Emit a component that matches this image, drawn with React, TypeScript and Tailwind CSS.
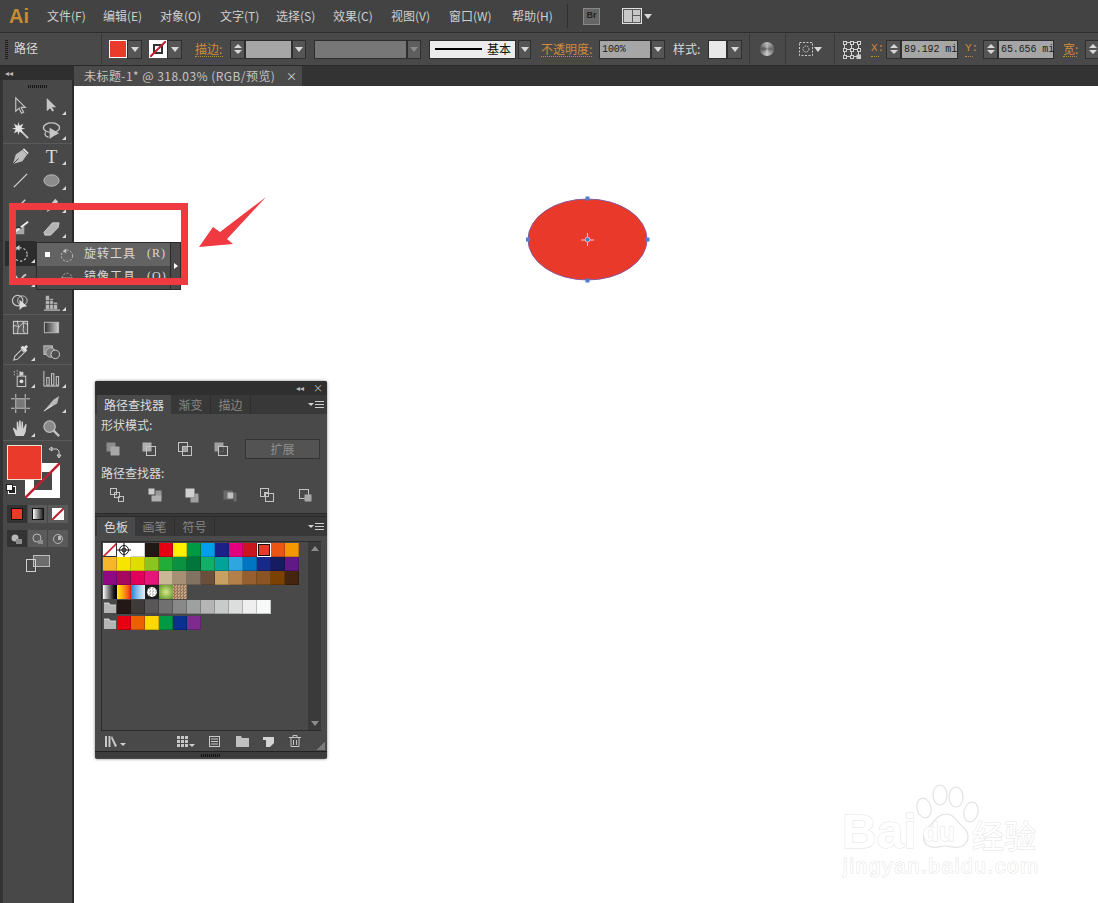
import type { ReactNode } from 'react';

const cjk = "font-['Noto_Sans_CJK_SC','Noto_Sans',sans-serif]";
const ic = '#c6c6c6';

function Svg({ size = 20, box = 20, children }: { size?: number; box?: number; children: ReactNode }) {
  return (
    <svg width={size} height={size} viewBox={`0 0 ${box} ${box}`} fill="none" className="block shrink-0">
      {children}
    </svg>
  );
}

/* ---------- left toolbar icons ---------- */
const tools: Record<string, ReactNode> = {
  select: <path d="M5 2v14l3.5-3.2 2.6 5.4 2.2-1-2.6-5.2H15z" stroke={ic} strokeWidth="1.2" />,
  direct: <path d="M5 2v14l3.5-3.2 2.4 3.6 1.8-1.2-2.2-3.4H15z" fill={ic} />,
  wand: (
    <>
      <path d="M9 9l9 9" stroke={ic} strokeWidth="2" />
      <path d="M8 1l1 4 4-2-2 4 4 1-4 1 2 4-4-2-1 4-1-4-4 2 2-4-4-1 4-1-2-4 4 2z" fill="#e4e4e4" />
    </>
  ),
  lasso: (
    <>
      <ellipse cx="10" cy="7" rx="8.5" ry="5" stroke={ic} strokeWidth="1.5" />
      <path d="M8 7v12l4-3 6-3z" fill={ic} />
      <path d="M4 11c-2 3 0 6 3 6" stroke={ic} strokeWidth="1.2" />
    </>
  ),
  pen: (
    <>
      <path d="M2 18l3-10 7-5 5 5-5 7z" fill="#bdbdbd" />
      <path d="M2 18l6-6" stroke="#444" strokeWidth="1" />
      <path d="M13 2l5 5" stroke="#e0e0e0" strokeWidth="2" />
    </>
  ),
  text: <text x="10" y="17" textAnchor="middle" fontSize="20" fill="#d8d8d8" fontFamily="'Liberation Serif',serif">T</text>,
  line: <path d="M3 17L17 3" stroke="#d4d4d4" strokeWidth="1.3" />,
  ellipse: <ellipse cx="10" cy="10" rx="8" ry="6" fill="#8c8c8c" stroke="#bdbdbd" />,
  brush: <path d="M4 16L15 5" stroke="#d4d4d4" strokeWidth="1.4" />,
  pencil: <path d="M5 18l2-6 7-8 3 3-7 8z" fill="#c8c8c8" />,
  blob: (
    <>
      <path d="M2 16l3-7 9-1v8z" fill="#a8a8a8" />
      <path d="M5 13L18 3" stroke="#eee" strokeWidth="2" />
      <path d="M3 11c3-3 6-3 8-1" stroke="#333" strokeWidth="1.5" />
    </>
  ),
  eraser: <path d="M2 14L11 4h7l-1 5-8 8H3z" fill="#b4b4b4" stroke="#dadada" strokeWidth=".8" />,
  rotate: (
    <>
      <circle cx="10" cy="11" r="7" stroke="#bdbdbd" strokeWidth="1.3" strokeDasharray="2.5 2" />
      <path d="M9 1v6l-4-3z" fill="#cfcfcf" />
    </>
  ),
  warp: (
    <>
      <path d="M3 6c3 0 2 5 6 5s3-5 7-5" stroke={ic} strokeWidth="2" />
      <path d="M3 16l5-5" stroke={ic} strokeWidth="2" />
    </>
  ),
  builder: (
    <>
      <circle cx="7" cy="8" r="5.5" stroke={ic} strokeWidth="1.3" />
      <circle cx="12" cy="8" r="5" stroke={ic} strokeWidth="1" />
      <path d="M9 7v11l3-3 5-1z" fill="#dcdcdc" />
    </>
  ),
  grid: (
    <>
      <path d="M4 3h4v14H4zM8 6h4v11H8zM12 10h4v7h-4z" fill="#b5b5b5" />
      <path d="M4 8h12M4 12h12M8 3v14M12 6v11" stroke="#444" strokeWidth=".8" />
      <path d="M2 18h17" stroke="#ddd" />
    </>
  ),
  mesh: (
    <>
      <rect x="2.5" y="3.5" width="15" height="13" fill="#5c5c5c" stroke="#d4d4d4" />
      <path d="M2 9c4-3 5 3 8-1s4-3 8-1M7 3c-1 4 2 5 1 7s-1 4-1 6M13 4c-1 3 1 5 0 7s1 4 1 5" stroke="#e0e0e0" strokeWidth=".9" />
    </>
  ),
  gradient: (
    <>
      <defs>
        <linearGradient id="tg" x1="0" x2="1">
          <stop offset="0" stopColor="#2f2f2f" />
          <stop offset="1" stopColor="#d0d0d0" />
        </linearGradient>
      </defs>
      <rect x="2.5" y="4.5" width="15" height="11" fill="url(#tg)" stroke="#bbb" />
    </>
  ),
  dropper: (
    <>
      <path d="M3 18l1-4 7-7 3 3-7 7z" stroke="#d0d0d0" strokeWidth="1.1" />
      <path d="M10 5l5 5 2-2-1-2 2-2-2-2-2 2-2-1z" fill="#dcdcdc" />
    </>
  ),
  blend: (
    <>
      <rect x="2" y="3" width="9" height="9" fill="#8a8a8a" stroke="#c4c4c4" />
      <circle cx="9" cy="10" r="5" fill="#777" stroke="#c4c4c4" />
      <circle cx="14" cy="12" r="4.5" fill="#4c4c4c" stroke="#d0d0d0" />
    </>
  ),
  spray: (
    <>
      <path d="M3 3h1M6 2h1M9 3h1M3 6h1M6 5h1M9 6h1" stroke="#ddd" strokeWidth="1.2" />
      <rect x="6.5" y="7.5" width="9" height="11" stroke="#d4d4d4" />
      <rect x="9" y="3" width="4" height="4" fill="#cfcfcf" />
      <circle cx="11" cy="13" r="2" fill="#ddd" />
    </>
  ),
  graph: (
    <>
      <path d="M2 2v16h16" stroke="#cfcfcf" />
      <rect x="5" y="9" width="2.5" height="8" stroke="#cfcfcf" />
      <rect x="10" y="5" width="2.5" height="12" stroke="#cfcfcf" />
      <rect x="15" y="8" width="2.5" height="9" stroke="#cfcfcf" />
    </>
  ),
  artboard: (
    <>
      <rect x="5" y="5" width="10" height="10" fill="#787878" stroke="#bdbdbd" />
      <path d="M0 5h4M16 5h4M0 15h4M16 15h4M5 0v4M15 0v4M5 16v4M15 16v4" stroke="#d0d0d0" />
    </>
  ),
  slice: (
    <>
      <path d="M2 18L12 6l6-4-2 8z" fill="#b8b8b8" />
      <path d="M2 18l9-6" stroke="#e4e4e4" />
    </>
  ),
  hand: <path d="M5 18L2 10l1-1 3 3V3h1.5l1 7V1.5h1.5l1 8.5V2.5h1.5l.5 8 2-5h1.5l-1 8-2 4.5z" fill="#cfcfcf" />,
  zoom: (
    <>
      <circle cx="8" cy="8" r="6" fill="#8a8a8a" stroke="#bcbcbc" strokeWidth="1.3" />
      <path d="M12 12l6 6" stroke="#c4c4c4" strokeWidth="2.4" />
    </>
  ),
};

function Tool({ name, corner = true, active = false }: { name: string; corner?: boolean; active?: boolean }) {
  return (
    <div className={`relative flex h-full w-[31px] items-center justify-center ${active ? 'bg-[#2c2c2c]' : ''}`}>
      <Svg size={19}>{tools[name]}</Svg>
      {corner && <span className="absolute bottom-[3px] right-[1px] h-0 w-0 border-b-[4px] border-l-[4px] border-b-[#d8d8d8] border-l-transparent" />}
    </div>
  );
}

function ToolRow({ a, b, ca = false, cb = true, active = false, h = 'h-[25px]' }: { a: string; b: string; ca?: boolean; cb?: boolean; active?: boolean; h?: string }) {
  return (
    <div className={`flex ${h} shrink-0 pl-[2px] pr-[2px]`}>
      <Tool name={a} corner={ca} active={active} />
      <Tool name={b} corner={cb} />
    </div>
  );
}

const Sep = () => <div className="h-[1px] shrink-0 bg-[#5a5a5a]" />;

function ModeCell({ children, active = false }: { children: ReactNode; active?: boolean }) {
  return <div className={`flex flex-1 items-center justify-center ${active ? 'bg-[#333333]' : 'bg-[#5a5a5a]'}`}>{children}</div>;
}

function Toolbar() {
  return (
    <aside className="flex w-[74px] shrink-0 flex-col border-r-2 border-l-[3px] border-r-[#2a2a2a] border-l-[#333333] bg-[#484848]">
      <div className="-ml-[3px] flex h-[14px] w-[74px] shrink-0 items-center bg-[#2f2f2f] pl-[5px] text-[8px] leading-none text-[#bbbbbb]">◂◂</div>
      <div className="flex h-[13px] shrink-0 items-center justify-center">
        <div className="h-[3px] w-[20px] bg-[repeating-linear-gradient(90deg,#151515_0_1px,transparent_1px_2px)]" />
      </div>
      <ToolRow a="select" b="direct" />
      <ToolRow a="wand" b="lasso" />
      <Sep />
      <ToolRow a="pen" b="text" h="h-[24px]" />
      <ToolRow a="line" b="ellipse" />
      <ToolRow a="brush" b="pencil" h="h-[23px]" />
      <ToolRow a="blob" b="eraser" />
      <ToolRow a="rotate" b="rotate" active ca />
      <ToolRow a="warp" b="warp" ca h="h-[24px]" />
      <ToolRow a="builder" b="grid" h="h-[24px]" />
      <Sep />
      <ToolRow a="mesh" b="gradient" cb={false} />
      <ToolRow a="dropper" b="blend" ca cb={false} h="h-[24px]" />
      <Sep />
      <div className="h-[1px] shrink-0" />
      <ToolRow a="spray" b="graph" ca />
      <ToolRow a="artboard" b="slice" cb />
      <ToolRow a="hand" b="zoom" ca cb={false} h="h-[24px]" />
      <Sep />

      {/* fill + stroke */}
      <div className="relative ml-[4px] mt-[4px] h-[56px] w-[60px] shrink-0">
        <div className="absolute left-[18px] top-[18px] flex h-[35px] w-[35px] items-center justify-center bg-white">
          <div className="flex h-[18px] w-[18px] items-center justify-center bg-[#484848]" />
          <svg className="absolute inset-0" width="35" height="35"><path d="M0 35L35 0" stroke="#c0202e" strokeWidth="2.5" /></svg>
        </div>
        <div className="absolute left-0 top-0 h-[35px] w-[35px] border border-[#f0e0d0] bg-[#ea3a2b]" />
        <svg className="absolute left-[41px] top-0" width="14" height="14" viewBox="0 0 14 14" fill="none">
          <path d="M3 4h6l2 2v6M1 4l3-2v4zM11 13l-2-3h4z" stroke="#d0d0d0" />
        </svg>
        <div className="absolute left-[1px] top-[41px] h-[8px] w-[8px] border border-white bg-[#222222]" />
        <div className="absolute left-[-1px] top-[39px] h-[7px] w-[7px] border border-[#222222] bg-white" />
      </div>

      <div className="ml-[4px] mt-[4px] flex h-[18px] w-[61px] shrink-0 gap-[1px]">
        <ModeCell active><div className="h-[12px] w-[12px] border border-[#111] bg-[#ea3a2b]" /></ModeCell>
        <ModeCell><div className="h-[12px] w-[12px] border border-[#111] bg-gradient-to-r from-white to-[#222222]" /></ModeCell>
        <ModeCell>
          <svg width="12" height="12"><rect width="12" height="12" fill="#fff" /><path d="M0 12L12 0" stroke="#c0202e" strokeWidth="2" /></svg>
        </ModeCell>
      </div>
      <div className="ml-[4px] mt-[7px] flex h-[17px] w-[61px] shrink-0 gap-[1px]">
        <ModeCell active>
          <Svg size={12} box={12}><circle cx="4" cy="5" r="3.5" fill="#b8b8b8" /><rect x="5" y="6" width="6" height="5" fill="#8c8c8c" /></Svg>
        </ModeCell>
        <ModeCell>
          <Svg size={12} box={12}><circle cx="5" cy="5" r="4" stroke="#b8b8b8" /><rect x="6" y="7" width="5" height="4" fill="#8c8c8c" /></Svg>
        </ModeCell>
        <ModeCell>
          <Svg size={12} box={12}><circle cx="6" cy="6" r="4.5" stroke="#b8b8b8" /><rect x="6" y="3" width="3" height="4" fill="#b8b8b8" /></Svg>
        </ModeCell>
      </div>
      <div className="mt-[8px] flex justify-center">
        <svg width="24" height="18" viewBox="0 0 24 18" fill="none">
          <rect x="7.5" y=".5" width="16" height="11" fill="#6d6d6d" stroke="#bdbdbd" />
          <rect x=".5" y="4.5" width="9" height="12" stroke="#cfcfcf" />
        </svg>
      </div>
    </aside>
  );
}

/* ---------- top bars ---------- */
const menus = [
  ['文件(F)', 'w-[39px]'],
  ['编辑(E)', 'w-[40px]'],
  ['对象(O)', 'w-[43px]'],
  ['文字(T)', 'w-[39px]'],
  ['选择(S)', 'w-[40px]'],
  ['效果(C)', 'w-[41px]'],
  ['视图(V)', 'w-[41px]'],
  ['窗口(W)', 'w-[46px]'],
  ['帮助(H)', 'w-[41px]'],
];

const Down = () => <span className="block h-0 w-0 border-x-[4px] border-t-[5px] border-x-transparent border-t-[#d8d8d8]" />;

function DropBtn({ className = 'w-[14px]' }: { className?: string }) {
  return <div className={`flex h-[19px] items-center justify-center border border-[#2e2e2e] bg-[#555555] ${className}`}><Down /></div>;
}

function Spinner() {
  return (
    <div className="flex h-[19px] w-[15px] shrink-0 flex-col items-center justify-center gap-[2px] border border-[#2e2e2e] bg-[#555555]">
      <span className="h-0 w-0 border-x-[4px] border-b-[4px] border-x-transparent border-b-[#d8d8d8]" />
      <span className="h-0 w-0 border-x-[4px] border-t-[4px] border-x-transparent border-t-[#d8d8d8]" />
    </div>
  );
}

function Field({ children, className }: { children?: ReactNode; className: string }) {
  return <div className={`flex h-[19px] shrink-0 items-center whitespace-nowrap border border-[#2e2e2e] bg-[#a6a6a6] pl-[2px] font-['Liberation_Mono',monospace] text-[10px] tracking-[-0.1px] text-[#1c1c1c] ${className}`}>{children}</div>;
}

function Label({ children, className }: { children: ReactNode; className: string }) {
  return <span className={`shrink-0 whitespace-nowrap border-b border-dotted border-[#c08a45] text-[12px] leading-[15px] text-[#d18b3c] ${className}`}>{children}</span>;
}

const VLine = ({ className }: { className: string }) => <div className={`h-[30px] w-[1px] shrink-0 bg-[#383838] ${className}`} />;

function MenuBar() {
  return (
    <header className="flex h-[33px] items-center border-b border-[#2d2d2d] bg-[#434343]">
      <span className="ml-[9px] w-[38px] font-['Liberation_Sans',sans-serif] text-[20px] font-bold leading-none text-[#c88c34]">Ai</span>
      <nav className="flex gap-[17px] text-[12px] text-[#cfcfcf]">
        {menus.map(([m, w]) => (
          <span key={m} className={`whitespace-nowrap ${w}`}>{m}</span>
        ))}
      </nav>
      <div className="ml-[14px] h-[24px] w-[1px] bg-[#2f2f2f]" />
      <div className="ml-[15px] flex h-[17px] w-[17px] items-center justify-center border border-[#888888] bg-[#666666] font-['Liberation_Sans',sans-serif] text-[9px] font-bold text-[#222222]">Br</div>
      <svg className="ml-[22px]" width="20" height="16" viewBox="0 0 20 16">
        <rect x=".5" y=".5" width="19" height="15" fill="#5a5a5a" stroke="#e0e0e0" />
        <rect x="2" y="2" width="8" height="12" fill="#c8c8c8" />
        <rect x="11" y="2" width="7" height="5" fill="#c8c8c8" />
        <rect x="11" y="8" width="7" height="6" fill="#c8c8c8" />
      </svg>
      <span className="ml-[2px]"><Down /></span>
    </header>
  );
}

function ControlBar() {
  return (
    <div className="flex h-[33px] items-center overflow-hidden border-b border-[#2a2a2a] bg-[#494949] text-[#d8d8d8]">
      <div className="ml-[5px] h-[20px] w-[3px] shrink-0 bg-[repeating-linear-gradient(0deg,#1d1d1d_0_1px,transparent_1px_2px)]" />
      <span className="ml-[6px] mb-[2px] w-[87px] shrink-0 text-[12px]">路径</span>
      <VLine className="" />
      <div className="ml-[7px] h-[18px] w-[18px] shrink-0 border border-white bg-[#ea3a2b]" />
      <DropBtn className="w-[15px] shrink-0" />
      <div className="relative ml-[7px] h-[18px] w-[18px] shrink-0 border border-white bg-white">
        <svg className="absolute inset-0" width="16" height="16"><rect x="4" y="4" width="8" height="8" fill="none" stroke="#333" strokeWidth="2" /><path d="M0 16L16 0" stroke="#c0202e" strokeWidth="2" /></svg>
      </div>
      <DropBtn className="w-[15px] shrink-0" />
      <Label className="ml-[13px] w-[28px]">描边:</Label>
      <div className="ml-[7px] flex">
        <Spinner />
        <Field className="w-[47px]" />
        <DropBtn className="w-[14px] shrink-0" />
      </div>
      <div className="ml-[8px] flex">
        <div className="h-[19px] w-[93px] shrink-0 border border-[#2e2e2e] bg-[#777777]" />
        <div className="flex h-[19px] w-[14px] shrink-0 items-center justify-center border border-[#2e2e2e] bg-[#5e5e5e]"><span className="h-0 w-0 border-x-[4px] border-t-[5px] border-x-transparent border-t-[#8a8a8a]" /></div>
      </div>
      <div className="ml-[8px] flex h-[19px] w-[87px] shrink-0 items-center border border-[#2e2e2e] bg-[#ececec] pl-[5px] text-[12px] text-[#111111]">
        <span className="h-[2px] w-[47px] bg-black" />
        <span className="ml-[5px]">基本</span>
      </div>
      <DropBtn className="ml-[2px] w-[13px] shrink-0" />
      <Label className="ml-[10px] w-[51px]">不透明度:</Label>
      <Field className="ml-[7px] w-[52px]">100%</Field>
      <DropBtn className="w-[14px] shrink-0" />
      <span className="ml-[8px] w-[28px] shrink-0 whitespace-nowrap text-[12px]">样式:</span>
      <div className="ml-[7px] h-[19px] w-[19px] shrink-0 border border-[#2e2e2e] bg-[#e8e8e8]" />
      <DropBtn className="w-[15px] shrink-0" />
      <VLine className="ml-[7px]" />
      <div className="ml-[10px] h-[14px] w-[14px] shrink-0 rounded-full bg-[conic-gradient(#bbbbbb,#666666,#cccccc,#555555,#bbbbbb)]" />
      <VLine className="ml-[11px]" />
      <svg className="ml-[13px] shrink-0" width="14" height="14" viewBox="0 0 14 14" fill="none">
        <rect x=".5" y=".5" width="13" height="13" stroke="#cfcfcf" strokeDasharray="2 1.5" />
        <circle cx="7" cy="7" r="3" stroke="#cfcfcf" strokeDasharray="1.5 1" />
      </svg>
      <span className="ml-[1px]"><Down /></span>
      <VLine className="ml-[12px]" />
      <svg className="ml-[7px] shrink-0" width="19" height="19" viewBox="0 0 19 19" fill="none" stroke="#d0d0d0">
        {[1, 8, 15].flatMap((y) =>
          [1, 8, 15].map((x) =>
            x === 15 && y === 15 ? (
              <rect key={`${x}-${y}`} x={x} y={y} width="3.5" height="3.5" fill="#d0d0d0" />
            ) : (
              <rect key={`${x}-${y}`} x={x + 0.5} y={y + 0.5} width="3" height="3" />
            ),
          ),
        )}
        <path d="M5 2.5h3M12 2.5h3M5 9.5h3M12 9.5h3M5 16.5h3M12 16.5h3M2.5 5v3M9.5 5v3M16.5 5v3M2.5 12v3M9.5 12v3M16.5 12v3" />
      </svg>
      <Label className="ml-[10px] w-[8px] font-['Liberation_Mono',monospace] !text-[11px]">X:</Label>
      <div className="ml-[7px] flex">
        <Spinner />
        <Field className="w-[57px]">89.192 mi</Field>
      </div>
      <Label className="ml-[7px] w-[8px] font-['Liberation_Mono',monospace] !text-[11px]">Y:</Label>
      <div className="ml-[10px] flex">
        <Spinner />
        <Field className="w-[56px]">65.656 mi</Field>
      </div>
      <Label className="ml-[9px] w-[14px]">宽:</Label>
      <div className="ml-[8px]"><Spinner /></div>
    </div>
  );
}

/* ---------- pathfinder / swatches panel ---------- */
type R = [number, number, number, number, string?];

function Squares({ rects }: { rects: R[] }) {
  return (
    <svg width="16" height="16" viewBox="0 0 16 16" className="block">
      {rects.map(([x, y, w, h, f], i) => (
        <rect key={i} x={x + 0.5} y={y + 0.5} width={w} height={h} fill={f ?? 'none'} stroke={f ? 'none' : '#c4c4c4'} />
      ))}
    </svg>
  );
}

const shapeIcons: R[][] = [
  [[1, 1, 9, 9, '#8c8c8c'], [5, 5, 9, 9, '#a8a8a8']],
  [[1, 1, 9, 9, '#b0b0b0'], [5, 5, 9, 9]],
  [[1, 1, 9, 9], [5, 5, 5, 5, '#a0a0a0'], [5, 5, 9, 9]],
  [[1, 1, 9, 9, '#a0a0a0'], [5, 5, 5, 5, '#484848'], [5, 5, 9, 9]],
];
const finderIcons: R[][] = [
  [[1, 1, 6, 6], [5, 5, 5, 5], [9, 9, 5, 5]],
  [[1, 1, 6, 6, '#cccccc'], [8, 3, 6, 6, '#999999'], [4, 8, 10, 6, '#b0b0b0']],
  [[1, 1, 9, 9, '#d0d0d0'], [6, 10, 8, 5, '#a0a0a0'], [10, 6, 4, 5, '#a0a0a0']],
  [[1, 3, 9, 9, '#6a6a6a'], [5, 5, 6, 6, '#c0c0c0'], [11, 5, 3, 9, '#6a6a6a']],
  [[1, 1, 8, 8], [5, 5, 4, 4], [6, 6, 8, 8]],
  [[2, 2, 9, 9], [7, 7, 7, 7, '#a8a8a8']],
];

const S = 'none';
const swatchRows: string[][] = [
  [S, 'reg', '#ffffff', '#231815', '#e60012', '#fff100', '#009944', '#00a0e9', '#1d2088', '#e4007f', '#c9151e', 'sel', '#ea5514', '#f39800'],
  ['#f8b62d', '#f7e500', '#dfdc00', '#8fc31f', '#22ac38', '#0a9142', '#00753c', '#13ae67', '#00a29a', '#2ea7e0', '#0075c2', '#172a88', '#171c61', '#601986'],
  ['#920783', '#a7085f', '#e3005b', '#e5177b', '#c9b795', '#a59076', '#827261', '#6a4f3c', '#c9a063', '#b3804a', '#955f2f', '#8a5522', '#7a4100', '#432510'],
];
const grays = ['#231815', '#3e3a39', '#595757', '#717071', '#898989', '#9fa0a0', '#b5b5b6', '#c9caca', '#dcdddd', '#efefef', '#f7f8f8'];
const brights = ['#e60012', '#eb6100', '#ffd900', '#009944', '#0b318f', '#7f2a8e'];

function Swatch({ c }: { c: string }) {
  if (c === 'none')
    return (
      <svg width="14" height="14" className="border-r border-b border-[#333333]">
        <rect width="14" height="14" fill="#fff" />
        <path d="M0 14L14 0" stroke="#d0202e" strokeWidth="1.6" />
      </svg>
    );
  if (c === 'reg')
    return (
      <svg width="14" height="14" viewBox="0 0 14 14" fill="none" stroke="#111">
        <rect width="14" height="14" fill="#fff" stroke="none" />
        <circle cx="7" cy="7" r="4.5" />
        <circle cx="7" cy="7" r="2" />
        <path d="M0 7h14M7 0v14" />
      </svg>
    );
  if (c === 'sel')
    return (
      <div className="flex h-[14px] w-[14px] items-center justify-center border border-white bg-[#111111]">
        <div className="h-[10px] w-[10px] bg-[#e8392a]" />
      </div>
    );
  return <div style={{ background: c }} className="h-[14px] w-[14px] border-r border-b border-black/20" />;
}

const Folder = () => (
  <svg width="14" height="14" viewBox="0 0 14 14">
    <path d="M1 3h5l1 2h6v8H1z" fill="#b4b4b4" />
    <path d="M1 3h5l1 2h6" stroke="#e4e4e4" fill="none" strokeWidth=".8" />
  </svg>
);

function PanelTabs({ tabs }: { tabs: string[] }) {
  return (
    <div className="flex h-[19px] items-stretch bg-[#383838] pl-[2px] pr-[3px] text-[12px] leading-[19px] text-[#868686]">
      {tabs.map((t, i) => (
        <span key={t} className={i === 0 ? 'bg-[#494949] px-[7px] text-[#dcdcdc]' : 'border-r border-[#2d2d2d] px-[7.5px]'}>{t}</span>
      ))}
      <span className="ml-auto flex items-center gap-[1px]">
        <span className="h-0 w-0 border-x-[3px] border-t-[3px] border-x-transparent border-t-[#d0d0d0]" />
        <span className="h-[7px] w-[9px] border-y border-[#cfcfcf] bg-[linear-gradient(#cfcfcf,#cfcfcf)] bg-[length:100%_1px] bg-center bg-no-repeat" />
      </span>
    </div>
  );
}

function Panel() {
  return (
    <section className={`absolute left-[95px] top-[381px] flex h-[378px] w-[232px] flex-col overflow-hidden rounded-[2px] bg-[#494949] shadow-[0_0_3px_rgba(0,0,0,0.5)] ${cjk}`}>
      <div className="flex h-[14px] items-center justify-end gap-[9px] bg-[#2f2f2f] pr-[4px] text-[8px] leading-none text-[#bdbdbd]">
        <span>◂◂</span>
        <span className="text-[10px]">×</span>
      </div>
      <PanelTabs tabs={['路径查找器', '渐变', '描边']} />

      <p className="ml-[6px] mt-[2px] h-[17px] text-[12px] leading-[17px] text-[#dadada]">形状模式:</p>
      <div className="mt-[3px] flex h-[26px] items-center pl-[10px]">
        <div className="flex w-[140px] gap-[20px]">
          {shapeIcons.map((r, i) => <Squares key={i} rects={r} />)}
        </div>
        <button className="h-[20px] w-[75px] border border-[#333333] bg-[#535353] text-[12px] leading-[16px] text-[#8f8f8f]">扩展</button>
      </div>
      <p className="ml-[6px] mt-[2px] h-[17px] text-[12px] leading-[17px] text-[#dadada]">路径查找器:</p>
      <div className="mt-[6px] flex gap-[21.5px] pl-[14px]">
        {finderIcons.map((r, i) => <Squares key={i} rects={r} />)}
      </div>

      <div className="mt-[10px] h-[4px] border-y border-[#2a2a2a] bg-[#383838]" />
      <PanelTabs tabs={['色板', '画笔', '符号']} />

      <div className="mx-[6px] mt-[5px] flex h-[190px] border border-[#2b2b2b] border-r-0">
        <div className="flex-1 pl-[1px] pt-[1px]">
          {swatchRows.map((row, i) => (
            <div key={i} className="flex">
              {row.map((c, j) => <Swatch key={j} c={c} />)}
            </div>
          ))}
          <div className="flex">
            <div className="h-[14px] w-[14px] bg-gradient-to-r from-white to-black" />
            <div className="h-[14px] w-[14px] bg-gradient-to-r from-[#fff100] to-[#e60012]" />
            <div className="h-[14px] w-[14px] bg-gradient-to-r from-[#1b7fce] via-[#8fc3ec] to-[#e4f0fa]" />
            <div className="flex h-[14px] w-[14px] items-center justify-center bg-[#1d1d1d]"><div className="h-[10px] w-[10px] rounded-full bg-[repeating-conic-gradient(#ffffff_0_25%,#c4c4c4_0_50%)] bg-[length:3px_3px]" /></div>
            <div className="h-[14px] w-[14px] bg-[radial-gradient(#d8e88a,#56901f)]" />
            <div className="h-[14px] w-[14px] bg-[repeating-conic-gradient(#9a7256_0_25%,#c4a98c_0_50%)] bg-[length:3px_3px]" />
          </div>
          <div className="mt-[1px] flex">
            <Folder />
            {grays.map((c) => <Swatch key={c} c={c} />)}
          </div>
          <div className="mt-[2px] flex">
            <Folder />
            {brights.map((c) => <Swatch key={c} c={c} />)}
          </div>
        </div>
        <div className="flex w-[13px] flex-col items-center justify-between bg-[#3a3a3a] py-[4px]">
          <span className="h-0 w-0 border-x-[4px] border-b-[5px] border-x-transparent border-b-[#8c8c8c]" />
          <span className="h-0 w-0 border-x-[4px] border-t-[5px] border-x-transparent border-t-[#8c8c8c]" />
        </div>
      </div>

      <div className="relative flex h-[20px] items-center pl-[10px] pr-[26px]">
        <svg width="13" height="12" viewBox="0 0 13 12" fill="#c8c8c8">
          <path d="M0 1h2v11H0zM3.5 1h2v11h-2zM7 1l5 10-2 1-4-9z" />
        </svg>
        <span className="ml-[2px] mt-[6px] h-0 w-0 border-x-[3px] border-t-[3px] border-x-transparent border-t-[#d0d0d0]" />
        <div className="ml-auto flex items-center gap-[14px]">
          <span className="flex items-end gap-[1px]">
            <svg width="11" height="11" fill="#c8c8c8"><path d="M0 0h3v3H0zM4 0h3v3H4zM8 0h3v3H8zM0 4h3v3H0zM4 4h3v3H4zM8 4h3v3H8zM0 8h3v3H0zM4 8h3v3H4zM8 8h3v3H8z" /></svg>
            <span className="h-0 w-0 border-x-[3px] border-t-[3px] border-x-transparent border-t-[#d0d0d0]" />
          </span>
          <svg width="11" height="11" fill="none" stroke="#c8c8c8"><rect x=".5" y=".5" width="10" height="10" /><path d="M2 3h7M2 5.5h7M2 8h7" /></svg>
          <svg className="ml-[2px]" width="13" height="11" fill="#c0c0c0"><path d="M0 0h5l1 2h7v9H0z" /></svg>
          <svg width="12" height="11" fill="#d4d4d4"><path d="M0 1h11v6l-4 4H3V4H0z" /></svg>
          <svg width="12" height="12" fill="none" stroke="#c4c4c4"><path d="M0 2.5h12M4 2.5V.5h4v2M2 3v8.5h8V3M4.5 5v5M7.5 5v5" /></svg>
        </div>
        <span className="absolute bottom-[1px] right-[2px] h-[8px] w-[8px] bg-[linear-gradient(135deg,transparent_50%,#7a7a7a_50%)]" />
      </div>

      <div className="flex h-[7px] items-center justify-center border-t border-[#222222] bg-[#3c3c3c]">
        <div className="h-[3px] w-[20px] bg-[repeating-linear-gradient(90deg,#111111_0_1px,transparent_1px_2px)]" />
      </div>
    </section>
  );
}

/* ---------- things floating on the canvas ---------- */
function Flyout() {
  return (
    <div className={`absolute left-[36px] top-[242px] h-[48px] w-[145px] border border-[#2b2b2b] bg-[#4a4a4a] text-[#d8d8d8] ${cjk}`}>
      <div className="flex h-[23px] items-center bg-[#636363] pr-[10px]">
        <span className="ml-[8px] h-[5px] w-[5px] bg-white" />
        <span className="ml-[9px]"><Svg size={16}><circle cx="10" cy="11" r="7" stroke="#c4c4c4" strokeWidth="1.2" strokeDasharray="2.5 2" /><path d="M9 2v6l-4-3z" fill="#c4c4c4" /></Svg></span>
        <span className="ml-[9px] mb-[3px] text-[12px] tracking-[1px]">旋转工具</span>
        <span className="ml-[11px] mb-[3px] font-['Liberation_Serif',serif] text-[12px] tracking-[1px]">(R)</span>
      </div>
      <div className="flex h-[23px] items-center pr-[10px]">
        <span className="ml-[22px]"><Svg size={16}><circle cx="10" cy="10" r="6" stroke="#c4c4c4" strokeDasharray="2.5 2" /><path d="M3 10h14" stroke="#c4c4c4" /></Svg></span>
        <span className="ml-[9px] mb-[3px] text-[12px] tracking-[1px]">镜像工具</span>
        <span className="ml-[11px] mb-[3px] font-['Liberation_Serif',serif] text-[12px] tracking-[1px]">(O)</span>
      </div>
      <div className="absolute right-0 top-0 flex h-full w-[10px] items-center justify-center border-l border-[#2b2b2b] bg-[#4a4a4a]">
        <span className="h-0 w-0 border-y-[3px] border-l-[4px] border-y-transparent border-l-white" />
      </div>
    </div>
  );
}

function Ellipse() {
  return (
    <svg className="absolute left-[522px] top-[192px]" width="132" height="94" viewBox="0 0 132 94">
      <ellipse cx="65.5" cy="47.5" rx="59.5" ry="40.5" fill="#e8392a" stroke="#8a5a9a" strokeWidth="1" />
      <g fill="#4d7fd0">
        <rect x="63.5" y="4.5" width="4" height="4" />
        <rect x="63.5" y="86.5" width="4" height="4" />
        <rect x="4" y="45.5" width="4" height="4" />
        <rect x="123.5" y="45.5" width="4" height="4" />
      </g>
      <path d="M59 48h13M65.5 41v13" stroke="#f3c8c0" strokeWidth="1" />
      <circle cx="65.5" cy="47.5" r="2.5" fill="#4d7fd0" stroke="#f3d8d0" strokeWidth=".7" />
    </svg>
  );
}

function Annotation() {
  return (
    <>
      <div className="absolute left-[9px] top-[203px] h-[82px] w-[179px] border-[7px] border-[#ee3a40]" />
      <svg className="absolute left-[195px] top-[193px]" width="75" height="58" viewBox="0 0 75 58">
        <path d="M4 54L18 34l7 5L71 4 32 46l6 5z" fill="#ee3a40" />
      </svg>
    </>
  );
}

const stroke = '[-webkit-text-stroke:1px_#e3e3e3] [paint-order:stroke]';

function Watermark() {
  return (
    <div className="absolute left-[842px] top-[784px] h-[96px] w-[200px] font-['Liberation_Sans',sans-serif] text-white">
      <span className={`absolute left-0 top-[20px] text-[48px] font-bold leading-[56px] ${stroke}`}>Bai</span>
      <svg className="absolute left-[70px] top-0" width="68" height="70" viewBox="0 0 68 70" fill="#ffffff" stroke="#e3e3e3" strokeWidth="1.2">
        <ellipse cx="12" cy="24" rx="7" ry="10" transform="rotate(-15 12 24)" />
        <ellipse cx="28" cy="11" rx="7" ry="10" />
        <ellipse cx="44" cy="13" rx="7" ry="10" />
        <ellipse cx="59" cy="28" rx="7" ry="10" transform="rotate(15 59 28)" />
        <path d="M34 30c8 0 11 8 17 13s7 13 1 18-14 1-19 1-12 4-18-1-3-13 2-18 9-13 17-13z" />
      </svg>
      <span className={`absolute left-[81px] top-[33px] text-[26px] font-bold leading-[30px] ${stroke}`}>du</span>
      <span className={`absolute left-[130px] top-[31px] text-[32px] leading-[38px] ${cjk} ${stroke}`}>经验</span>
      <span className={`absolute left-[1px] top-[70px] text-[21px] tracking-[1.6px] leading-[24px] ${stroke}`}>jingyan.baidu.com</span>
    </div>
  );
}

export default function App() {
  return (
    <div className={`relative flex h-[903px] w-[1098px] flex-col overflow-hidden bg-[#444444] ${cjk}`}>
      <MenuBar />
      <ControlBar />
      <div className="flex min-h-0 flex-1">
        <Toolbar />
        <main className="flex min-w-0 flex-1 flex-col bg-white">
          <div className="flex h-[20px] shrink-0 bg-[#333333]">
            <div className="flex w-[228px] items-center bg-[#4a4a4a] pl-[10px] text-[12px] text-[#c4c4c4]">
              <span className="whitespace-nowrap tracking-[0.45px]">未标题-1* @ 318.03% (RGB/预览)</span>
              <span className="ml-auto pr-[5px] text-[11px] text-[#dddddd]">×</span>
            </div>
          </div>
          <div className="flex-1 bg-white" />
        </main>
      </div>
      <Ellipse />
      <Panel />
      <Flyout />
      <Annotation />
      <Watermark />
    </div>
  );
}
